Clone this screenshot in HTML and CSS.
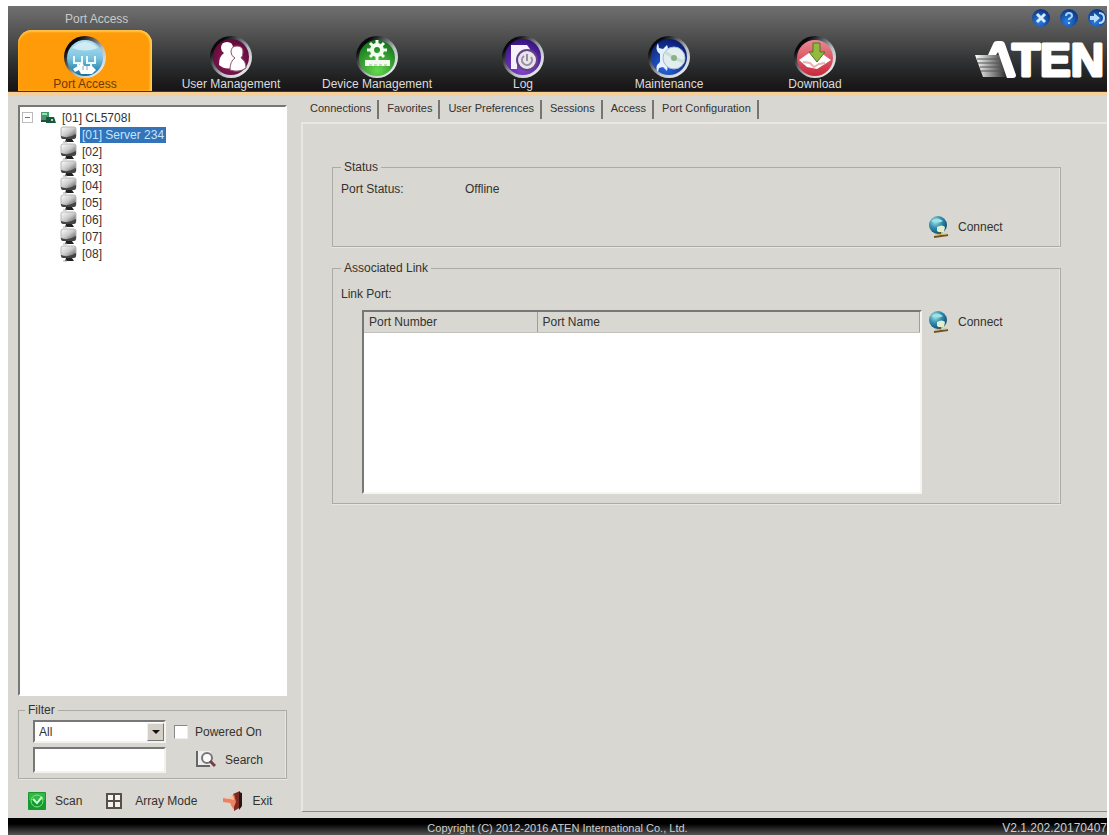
FILE: index.html
```
<!DOCTYPE html>
<html lang="en">
<head>
<meta charset="utf-8">
<title>Port Access</title>
<meta name="viewport" content="width=device-width, initial-scale=1">
<link rel="stylesheet" href="styles.css">
</head>
<body>
<svg class="defs" width="0" height="0" aria-hidden="true">
  <defs>
    <linearGradient id="rim" x1="0" y1="0" x2="1" y2="1"><stop offset="0.2" stop-color="#08090c"/><stop offset="0.6" stop-color="#b9bfc4"/><stop offset="1" stop-color="#fff"/></linearGradient>
    <linearGradient id="sky" x1="0" y1="0" x2="0" y2="1"><stop offset="0" stop-color="#b5e3f2"/><stop offset="0.5" stop-color="#7cc3df"/><stop offset="1" stop-color="#096f9c"/></linearGradient>
    <radialGradient id="plum" cx="0.5" cy="0.6" r="0.6"><stop offset="0" stop-color="#9b1e5f"/><stop offset="1" stop-color="#5d0b38"/></radialGradient>
    <radialGradient id="green" cx="0.5" cy="0.85" r="0.8"><stop offset="0" stop-color="#65d94d"/><stop offset="1" stop-color="#16751d"/></radialGradient>
    <radialGradient id="violet" cx="0.5" cy="0.8" r="0.8"><stop offset="0" stop-color="#8949d6"/><stop offset="1" stop-color="#34107c"/></radialGradient>
    <radialGradient id="blue" cx="0.4" cy="0.8" r="0.8"><stop offset="0" stop-color="#2765dc"/><stop offset="1" stop-color="#0a1c72"/></radialGradient>
    <linearGradient id="red" x1="0" y1="0" x2="0" y2="1"><stop offset="0" stop-color="#eb8a92"/><stop offset="1" stop-color="#c9283a"/></linearGradient>
    <radialGradient id="orb" cx="0.4" cy="0.7" r="0.7"><stop offset="0" stop-color="#2b80e2"/><stop offset="1" stop-color="#0a3580"/></radialGradient>
    <linearGradient id="fan" x1="0" y1="0" x2="1" y2="0"><stop offset="0" stop-color="#fff"/><stop offset="0.9" stop-color="#333"/></linearGradient>
    <linearGradient id="screen" x1="0" y1="0" x2="1" y2="1"><stop offset="0" stop-color="#fff"/><stop offset="0.5" stop-color="#c9c9c9"/><stop offset="1" stop-color="#4a4a4a"/></linearGradient>
    <radialGradient id="ball" cx="0.35" cy="0.3" r="0.8"><stop offset="0" stop-color="#a9e3e8"/><stop offset="0.45" stop-color="#338fae"/><stop offset="1" stop-color="#0c3f66"/></radialGradient>
    <symbol id="monitor" viewBox="0 0 17 17"><rect x="1" y="1" width="15" height="11" rx="2" fill="url(#screen)" stroke="#b5b5b5"/><path d="M1 10q7 3 15-2v3q0 2-2 2H3q-2 0-2-2z" fill="#444"/><path d="M6 13h6l2 3H5z" fill="#222"/><path d="M3 16h4" stroke="#aaa"/></symbol>
    <symbol id="globe" viewBox="0 0 22 24"><circle cx="10" cy="10" r="9" fill="url(#ball)"/><path d="M3 6q6-5 12 0-5 3-12 0z" fill="#9ee2e4"/><path d="M9 12q5-3 8 0l-1 5q-4 2-7-1z" fill="#e1efcf"/><path d="M12 17v3M6 22l14-2" stroke="#6b5524" stroke-width="2" fill="none"/><path d="M7 20l12-1" stroke="#d8b25f" fill="none"/></symbol>
  </defs>
</svg>

<div class="app">
  <header class="top">
    <div class="titlebar">
      <h1 class="title">Port Access</h1>
      <div class="orbs">
        <button class="orb" type="button" aria-label="Close"><svg viewBox="0 0 20 20"><circle cx="10" cy="10" r="9" fill="url(#orb)"/><path d="M6 6l8 8M14 6l-8 8" stroke="#d9ebff" stroke-width="3"/></svg></button>
        <button class="orb" type="button" aria-label="Help"><svg viewBox="0 0 20 20"><circle cx="10" cy="10" r="9" fill="url(#orb)"/><path d="M7 8q0-3 3-3t3 3q0 1-3 3v1M10 14v2" stroke="#a7d2ff" stroke-width="2" fill="none"/></svg></button>
        <button class="orb" type="button" aria-label="Log out"><svg viewBox="0 0 20 20"><circle cx="10" cy="10" r="9" fill="url(#orb)"/><path d="M3 8h4V5l6 5-6 5v-3H3z" fill="#b9dbff"/><path d="M12 5q5 0 5 5t-5 5" stroke="#b9dbff" stroke-width="2" fill="none"/></svg></button>
      </div>
    </div>
    <nav class="nav">
      <a class="nav-item active" href="#port"><svg class="nav-icon" viewBox="0 0 42 42"><circle cx="21" cy="21" r="21" fill="url(#rim)"/><circle cx="21" cy="22" r="18" fill="url(#sky)"/><path d="M8 12q13-12 26 0-13 5-26 0z" fill="#e4f4f8" opacity="0.7"/><path d="M10 20v7h8v-7M23 20v7h8v-7M14 27v3M27 27v3" fill="none" stroke="#e9fbff" stroke-width="2"/><path d="M9 33l5-3 4-4 2 4h8l4 4-4 4H17l-2-4-4 2z" fill="#fff"/><path d="M19 30v4M23 30v4" stroke="#78a9ba"/></svg><span>Port Access</span></a>
      <a class="nav-item" href="#users"><svg class="nav-icon" viewBox="0 0 42 42"><circle cx="21" cy="21" r="21" fill="url(#rim)"/><circle cx="21" cy="21" r="18" fill="url(#plum)"/><path d="M17 6q6 0 6 6 0 4-2 6 4 2 4 8v5q-9 4-16-2 0-9 5-12-3-2-3-5 0-6 6-6z" fill="#fff"/><path d="M27 10q6 0 6 6 0 4-2 6 5 3 5 10-7 5-16 2 0-9 5-12-4-2-4-6 0-6 6-6z" fill="#fff" stroke="#8e5370"/></svg><span>User Management</span></a>
      <a class="nav-item" href="#devices"><svg class="nav-icon" viewBox="0 0 42 42"><circle cx="21" cy="21" r="21" fill="url(#rim)"/><circle cx="21" cy="22" r="18" fill="url(#green)"/><circle cx="21" cy="14" r="5" fill="none" stroke="#f2fff0" stroke-width="4"/><path d="M21 4v4M21 20v4M11 14h4M27 14h4M14 7l3 3M25 18l3 3M28 7l-3 3M17 18l-3 3" stroke="#f2fff0" stroke-width="3"/><rect x="9" y="24" width="25" height="6" fill="#f4faf2"/><path d="M13 29h18" stroke="#9abf92" stroke-dasharray="3 2"/></svg><span>Device Management</span></a>
      <a class="nav-item" href="#log"><svg class="nav-icon" viewBox="0 0 42 42"><circle cx="21" cy="21" r="21" fill="url(#rim)"/><circle cx="21" cy="21" r="18" fill="url(#violet)"/><path d="M9 9h16l3 4v4q-14 1-13 16H9z" fill="#f6f2fc"/><circle cx="25" cy="24" r="10" fill="#e8e5e9" stroke="#65418c" stroke-width="2"/><path d="M22 20a5 5 0 1 0 7 1M25 18v7" fill="none" stroke="#9a8da5" stroke-width="2"/></svg><span>Log</span></a>
      <a class="nav-item" href="#maintenance"><svg class="nav-icon" viewBox="0 0 42 42"><circle cx="21" cy="21" r="21" fill="url(#rim)"/><circle cx="21" cy="21" r="18" fill="url(#blue)"/><path d="M10 7l1 5 4 1 4-4q3 6-3 9v9q5 2 3 8l-4-4-4 1-1 4q-4-5 2-10v-8q-6-4-2-11z" fill="#e6f1ff"/><circle cx="26" cy="22" r="11" fill="#e2edef" stroke="#aab9d4"/><path d="M26 22l-9-6M26 22l10 4" stroke="#c9dfd5" stroke-width="3"/><circle cx="26" cy="22" r="3" fill="#8bb084"/></svg><span>Maintenance</span></a>
      <a class="nav-item" href="#download"><svg class="nav-icon" viewBox="0 0 42 42"><circle cx="21" cy="21" r="21" fill="url(#rim)"/><circle cx="21" cy="22" r="18" fill="url(#red)"/><path d="M5 24l10-7h12l10 7-6 4-8 5-10-2z" fill="#fff"/><path d="M9 26l7 1 4 4 5-3 6-1" fill="none" stroke="#e1b5b4" stroke-width="2"/><path d="M19 7h7v9h5l-8 10-8-10h4z" fill="#92bb3d" stroke="#4f7525"/></svg><span>Download</span></a>
    </nav>
    <svg class="logo" viewBox="-4 -9 136 60" role="img" aria-label="ATEN"><path d="M0 16h24l10 22H8z" fill="url(#fan)"/><path d="M2 20h22M3 24h23M5 28h22M6 32h23" stroke="#555" stroke-width="1"/><path d="M13 16l5-11q1-3 4-3h4q3 0 4 3l11 31q0 3-3 3h-6L23 13l-2 3z" fill="#fff"/><text x="37" y="37" class="logo-text">TEN</text></svg>
  </header>

  <div class="body">
    <aside class="side">
      <div class="tree">
        <div class="root"><button class="toggle" type="button" aria-label="Collapse"></button><svg class="root-icon" viewBox="0 0 15 13"><path d="M0 1h8v8H0z" fill="#3c9b69"/><path d="M1 2h5v2H1z" fill="#a5d9b9"/><path d="M5 6h8l2 6H5z" fill="#145b3a"/><path d="M0 10h10" stroke="#2d4a3b" stroke-width="2"/><circle cx="11" cy="9" r="1" fill="#dff"/></svg><button class="node" type="button">[01] CL5708I</button></div>
        <ul class="ports">
          <li><svg class="port-icon"><use href="#monitor"/></svg><button class="node selected" type="button">[01] Server 234</button></li>
          <li><svg class="port-icon"><use href="#monitor"/></svg><button class="node" type="button">[02]</button></li>
          <li><svg class="port-icon"><use href="#monitor"/></svg><button class="node" type="button">[03]</button></li>
          <li><svg class="port-icon"><use href="#monitor"/></svg><button class="node" type="button">[04]</button></li>
          <li><svg class="port-icon"><use href="#monitor"/></svg><button class="node" type="button">[05]</button></li>
          <li><svg class="port-icon"><use href="#monitor"/></svg><button class="node" type="button">[06]</button></li>
          <li><svg class="port-icon"><use href="#monitor"/></svg><button class="node" type="button">[07]</button></li>
          <li><svg class="port-icon"><use href="#monitor"/></svg><button class="node" type="button">[08]</button></li>
        </ul>
      </div>
      <fieldset class="group filter">
        <legend>Filter</legend>
        <div class="select-wrap"><select class="select" aria-label="Filter by"><option>All</option></select><span class="arrow" aria-hidden="true"></span></div>
        <label class="check"><input type="checkbox"><span>Powered On</span></label>
        <input class="field" type="text" aria-label="Search text">
        <button class="action search" type="button"><svg width="20" height="20" viewBox="0 0 20 20"><path d="M1 1v15h13" fill="none" stroke="#666" stroke-width="2"/><path d="M2 1h13v14H2z" fill="#eee"/><circle cx="11" cy="8" r="5" fill="#fafafa" stroke="#777" stroke-width="2"/><path d="M14 11l5 5" stroke="#743f44" stroke-width="3"/></svg>Search</button>
      </fieldset>
      <div class="tools">
        <button class="action" type="button"><svg width="18" height="18" viewBox="0 0 18 18"><rect width="18" height="18" rx="1" fill="#159a2d"/><path d="M1 1h16v7H1z" fill="#35b548"/><circle cx="9" cy="9" r="6" fill="none" stroke="#7ce68a"/><path d="M5 7l4 4 5-6" fill="none" stroke="#c6ffcb" stroke-width="2"/></svg>Scan</button>
        <button class="action array" type="button"><svg width="16" height="16" viewBox="0 0 16 16"><path d="M1 1h14v14H1zM8 1v14M1 8h14" fill="#f5f3ec" stroke="#55504a" stroke-width="2"/></svg>Array Mode</button>
        <button class="action exit" type="button"><svg width="20" height="20" viewBox="0 0 20 20"><path d="M10 3l7-3 1 16-7 4z" fill="#7b2b20"/><path d="M16 1l3 1v13l-3 4z" fill="#2c1512"/><path d="M0 7l6 1 5-5 2 8-3 7-3-6-7-1z" fill="#ed8261"/><path d="M3 7l7-2 1 4z" fill="#ffc2a0"/></svg>Exit</button>
      </div>
    </aside>

    <main class="main">
      <nav class="tabs">
        <a class="tab current" href="#connections">Connections</a>
        <a class="tab" href="#favorites">Favorites</a>
        <a class="tab" href="#preferences">User Preferences</a>
        <a class="tab" href="#sessions">Sessions</a>
        <a class="tab" href="#access">Access</a>
        <a class="tab" href="#configuration">Port Configuration</a>
      </nav>
      <section class="panel">
        <fieldset class="group status">
          <legend>Status</legend>
          <dl class="facts"><dt>Port Status:</dt><dd>Offline</dd></dl>
          <button class="action connect" type="button"><svg width="22" height="24"><use href="#globe"/></svg>Connect</button>
        </fieldset>
        <fieldset class="group links">
          <legend>Associated Link</legend>
          <p class="caption" id="link-port">Link Port:</p>
          <div class="link-row">
            <div class="list">
              <table class="table" aria-labelledby="link-port"><thead><tr><th class="number">Port Number</th><th>Port Name</th></tr></thead></table>
            </div>
            <button class="action connect" type="button"><svg width="22" height="24"><use href="#globe"/></svg>Connect</button>
          </div>
        </fieldset>
      </section>
    </main>
  </div>

  <footer class="bottom"><span></span><span class="copyright">Copyright (C) 2012-2016 ATEN International Co., Ltd.</span><span class="version">V2.1.202.20170407</span></footer>
</div>
</body>
</html>
```
FILE: styles.css
```
* {
  box-sizing: border-box;
}

body {
  margin: 0;
  background: #fff;
  color: #33322f;
  font: 12px/16px "Liberation Sans", Arial, sans-serif;
}

button,
input,
select {
  font: inherit;
  color: inherit;
}

button {
  padding: 0;
  border: 0;
  background: none;
}

a {
  color: inherit;
  text-decoration: none;
}

.defs {
  display: block;
  height: 0;
}

.app {
  display: flex;
  flex-direction: column;
  min-height: 100vh;
  padding: 6px 2px 0 8px;
}

/* Header */
.top {
  position: relative;
  background: linear-gradient(#707070, #4b4b4b 40%, #2b2d2e 70%, #161314);
  border-bottom: 1px solid #5a2c12;
  color: #dcdcdc;
}

.titlebar {
  display: flex;
  justify-content: space-between;
  height: 24px;
  padding: 2px 0 0 57px;
}

.title {
  margin: 0;
  padding-top: 3px;
  font-size: 12px;
  font-weight: normal;
  color: #c9c9c9;
}

.orbs {
  display: flex;
  gap: 8px;
}

.orb {
  width: 20px;
  height: 20px;
}

.orb svg {
  display: block;
}

.nav {
  display: flex;
  gap: 12px;
  padding-left: 10px;
}

.nav-item {
  display: flex;
  flex-direction: column;
  align-items: center;
  width: 134px;
  height: 61px;
  padding-top: 6px;
  white-space: nowrap;
}

.nav-item.active {
  border-radius: 14px 14px 0 0;
  background: #ff9a08;
  box-shadow: inset 0 2px 2px #ffc44e, inset -2px 0 2px #ffd055;
  color: #6b3b05;
}

.nav-icon {
  flex: none;
  width: 42px;
  height: 42px;
}

.nav-item span {
  margin-top: -2px;
}

.logo {
  position: absolute;
  right: 0;
  bottom: 1px;
  width: 136px;
  height: 60px;
  pointer-events: none;
}

.logo-text {
  fill: #fff;
  stroke: #fff;
  stroke-width: 3px;
  stroke-linejoin: round;
  font: bold 46px "Liberation Sans", Arial, sans-serif;
}

/* Body */
.body {
  display: flex;
  flex: 1;
  border-top: 4px solid #f5cf97;
  background: #d9d7d1;
}

.side {
  display: flex;
  flex-direction: column;
  width: 293px;
  padding: 9px 14px 7px 10px;
}

.tree {
  flex: 1;
  padding: 2px;
  border: 2px solid #fff;
  border-top-color: #777;
  border-left-color: #777;
  background: #fff;
}

.root,
.ports li {
  display: flex;
  align-items: center;
}

.root {
  height: 17px;
}

.toggle {
  width: 11px;
  height: 11px;
  border: 1px solid #bbb;
  background: linear-gradient(#777, #777) center / 5px 1px no-repeat;
}

.root-icon {
  width: 15px;
  height: 13px;
  margin: 0 4px 0 8px;
}

.ports {
  margin: 0;
  padding: 0 0 0 38px;
  list-style: none;
}

.ports li {
  height: 17px;
}

.port-icon {
  width: 17px;
  height: 17px;
  margin-right: 3px;
}

.node {
  padding: 0 2px;
}

.node.selected {
  background: #3273b9;
  color: #c4e5ff;
}

.group {
  min-width: 0;
  margin: 0;
  border: 1px solid #adaba6;
  box-shadow: inset -1px 0 #e8e6e1, 0 1px #e8e6e1;
}

.group legend {
  height: 16px;
  padding: 0 3px;
}

.filter {
  display: grid;
  grid-template-columns: 133px 1fr;
  gap: 4px 8px;
  margin-top: 6px;
  padding: 2px 4px 5px 14px;
}

.filter legend {
  margin-left: -8px;
}

.select-wrap {
  position: relative;
  height: 23px;
}

.select,
.field {
  width: 100%;
  border: 2px solid #f4f2ee;
  border-top-color: #777;
  border-left-color: #777;
  border-radius: 0;
  background: #fff;
}

.select {
  height: 23px;
  padding: 0 4px;
  appearance: none;
}

.field {
  height: 26px;
  padding: 0 4px;
}

.arrow {
  position: absolute;
  top: 3px;
  right: 2px;
  width: 17px;
  height: 18px;
  border: 1px solid #f1efea;
  border-right-color: #777;
  border-bottom-color: #777;
  background: #d4d0c8;
  pointer-events: none;
}

.arrow::after {
  content: "";
  position: absolute;
  top: 6px;
  left: 4px;
  border: 4px solid transparent;
  border-top-color: #111;
  border-bottom: 0;
}

.check {
  display: flex;
  align-items: center;
  gap: 7px;
}

.check input {
  width: 14px;
  height: 14px;
  margin: 0;
  appearance: none;
  border: 1px solid #eee;
  border-top-color: #888;
  border-left-color: #888;
  background: #fff;
}

.action {
  display: flex;
  align-items: center;
  gap: 9px;
  white-space: nowrap;
}

.search {
  padding-left: 22px;
}

.tools {
  display: flex;
  padding: 12px 0 0 10px;
}

.array {
  margin-left: 24px;
  gap: 13px;
}

.exit {
  margin-left: 26px;
}

/* Content */
.main {
  display: flex;
  flex: 1;
  flex-direction: column;
  min-width: 0;
  padding-bottom: 6px;
}

.tabs {
  display: flex;
  height: 26px;
  padding: 4px 0 0 1px;
  font-size: 11px;
}

.tab {
  height: 19px;
  padding: 0 6px 0 8px;
  border-right: 2px solid #777570;
}

.panel {
  flex: 1;
  padding: 35px 46px 0 29px;
  border: 2px solid #e9e7e1;
  border-right: 0;
  border-bottom: 1px solid #8b8984;
}

.status {
  display: flex;
  flex-direction: column;
  justify-content: space-between;
  height: 88px;
  padding: 6px 57px 7px 8px;
}

.facts {
  display: grid;
  grid-template-columns: 124px 1fr;
  margin: 0;
}

.facts dd {
  margin: 0;
}

.connect {
  flex: none;
  width: 75px;
  gap: 8px;
}

.status .connect {
  margin-left: auto;
}

.links {
  margin-top: 13px;
  padding: 10px 57px 9px 8px;
}

.caption {
  margin: 0 0 8px;
}

.link-row {
  display: flex;
  gap: 6px;
  padding-left: 21px;
}

.list {
  flex: 1;
  height: 184px;
  border: 2px solid #f6f5f1;
  border-top-color: #777;
  border-left-color: #777;
  background: #fff;
}

.link-row .connect {
  align-self: flex-start;
}

.table {
  width: 100%;
  border-collapse: collapse;
  background: #d9d7d1;
}

.table th {
  height: 20px;
  padding: 1px 5px;
  border-right: 1px solid #a09e99;
  border-bottom: 1px solid #c2c0bb;
  font-weight: normal;
  text-align: left;
}

.table .number {
  width: 173px;
}

/* Footer */
.bottom {
  display: grid;
  grid-template-columns: 1fr auto 1fr;
  height: 17px;
  padding-top: 2px;
  background: linear-gradient(#000 35%, #555);
  color: #cfcfcf;
}

.copyright {
  font-size: 11px;
}

.version {
  text-align: right;
}
```
